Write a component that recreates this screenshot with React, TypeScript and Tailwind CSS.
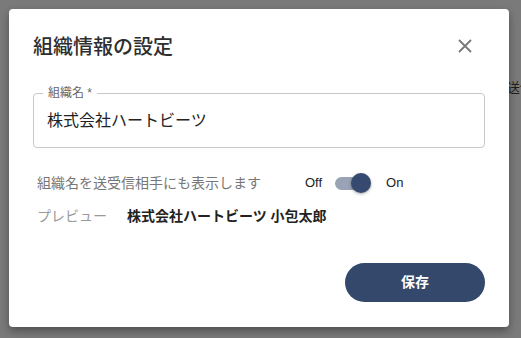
const font = "font-['Liberation_Sans','Noto_Sans_CJK_JP',sans-serif]";

const App = () => {
  return (
    <div className={`relative h-[338px] w-[521px] overflow-hidden bg-[#7a7a7a] p-[9px] ${font}`}>
      {/* page content behind the backdrop */}
      <span className="absolute left-[507px] top-[79px] text-[13px] leading-[18px] text-[#1e1e1e] whitespace-nowrap">
        送信
      </span>

      <div className="relative flex h-[318px] w-[500px] flex-col rounded-[4px] bg-white px-6 pt-5 shadow-[0_4px_8px_rgba(0,0,0,0.35)]">
        <div className="flex items-center justify-between">
          <h2 className="pt-[2px] text-[20px] leading-8 font-medium text-[#2e2e2e]">組織情報の設定</h2>
          <button className="mr-[8px] flex h-6 w-6 items-center justify-center">
            <svg width="14" height="14" viewBox="0 0 14 14">
              <path d="M1 1L13 13M13 1L1 13" stroke="#777" strokeWidth="1.8" />
            </svg>
          </button>
        </div>

        <div className="relative mt-[30px] h-[55px] rounded-[4px] border border-[#c8c8c8]">
          <span className="absolute -top-[9px] left-[9px] bg-white px-[5px] text-[12px] leading-4 text-[#666]">
            組織名 *
          </span>
          <div className="flex h-full items-center px-[13px] text-[16px] text-[#222]">
            株式会社ハートビーツ
          </div>
        </div>

        <div className="mt-[25px] flex h-5 items-center pl-1">
          <span className="w-[268px] text-[14px] text-[#777]">組織名を送受信相手にも表示します</span>
          <span className="text-[13px] text-[#222]">Off</span>
          <div className="relative ml-[13px] h-[13px] w-[34px] rounded-full bg-[#9aa3b5]">
            <div className="absolute -top-[4px] right-[-2px] h-[20px] w-[20px] rounded-full bg-[#354a6e] shadow-[0_1px_3px_rgba(0,0,0,0.35)]" />
          </div>
          <span className="ml-[17px] text-[13px] text-[#222]">On</span>
        </div>

        <div className="mt-[13px] flex h-5 items-center pl-1">
          <span className="w-[90px] text-[14px] text-[#9a9a9a]">プレビュー</span>
          <span className="text-[14px] font-bold text-[#222]">株式会社ハートビーツ 小包太郎</span>
        </div>

        <div className="mt-[37px] flex justify-end">
          <button className="h-[39px] w-[140px] rounded-full bg-[#34486b] text-[14px] font-bold text-white">
            保存
          </button>
        </div>
      </div>
    </div>
  );
};

export default App;
